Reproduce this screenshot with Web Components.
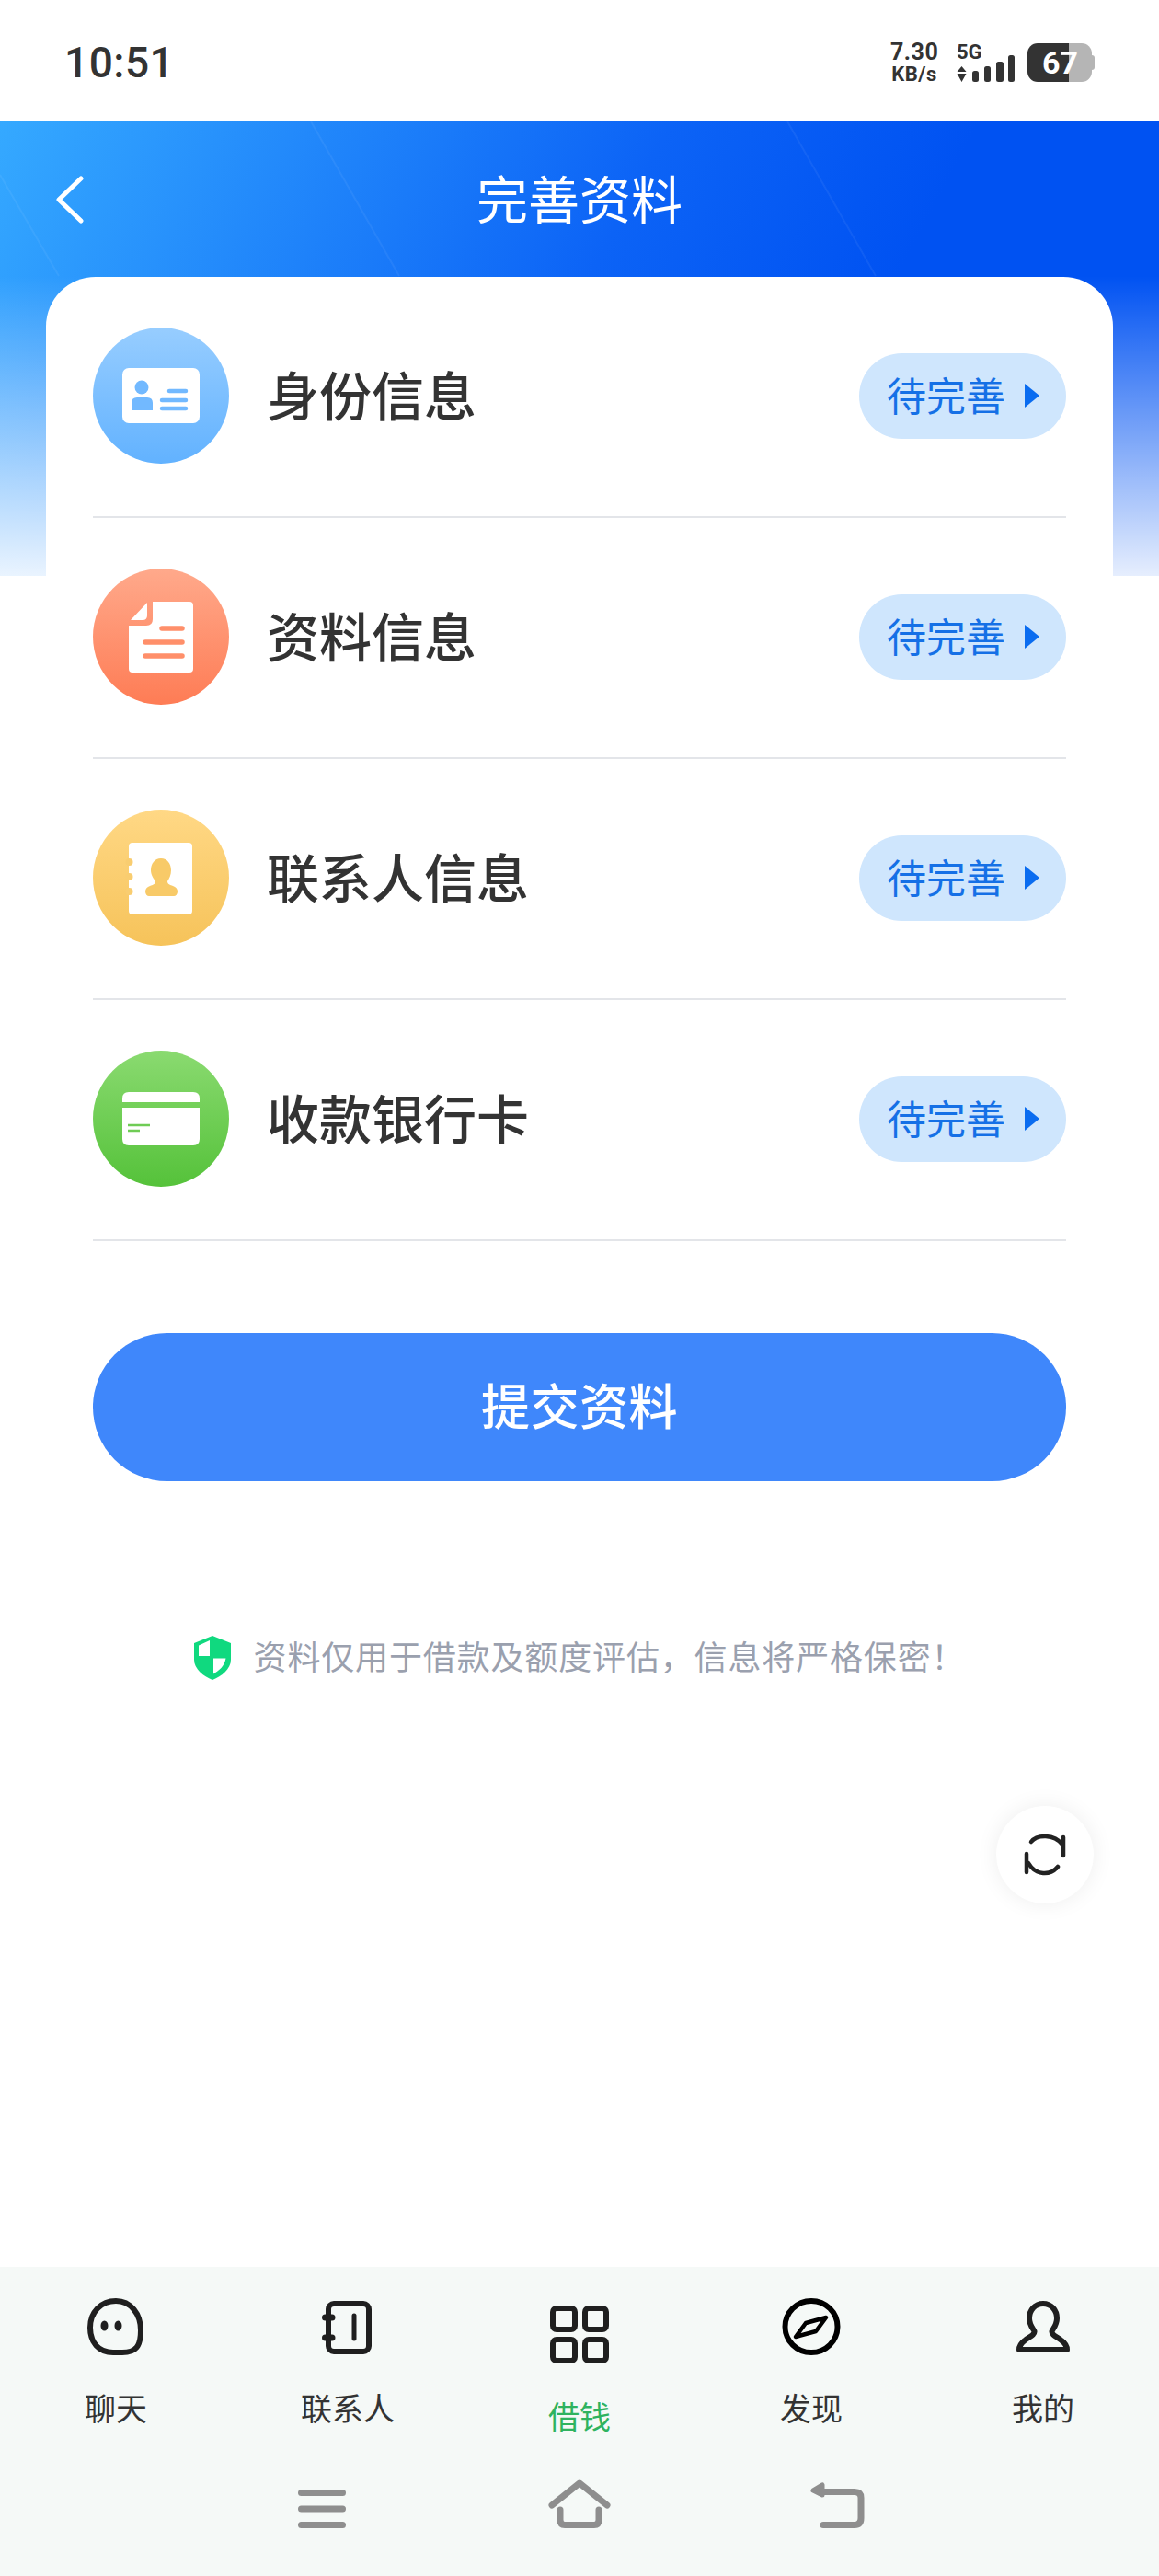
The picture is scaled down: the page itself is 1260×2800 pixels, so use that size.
<!DOCTYPE html>
<html lang="zh-CN">
<head>
<meta charset="utf-8">
<title>完善资料</title>
<style>
  html, body { margin: 0; background: #fff; }
  body { font-family: "Noto Sans CJK SC", "Noto Sans", sans-serif; }
</style>
</head>
<body>
<app-screen>
  <status-bar></status-bar>
  <page-header title="完善资料"></page-header>
  <info-card>
    <info-row label="身份信息" from="#97cdff" to="#62b2ff">
      <svg slot="icon" viewBox="0 0 148 148" width="148" height="148">
        <rect x="32" y="44" width="84" height="60" rx="7" fill="#fff"/>
        <circle cx="53" cy="65" r="7.5" fill="#72b9ff"/>
        <path d="M42 90V82q0-6 6-6h11q6 0 6 6v8z" fill="#72b9ff"/>
        <path d="M83 69H101M75 79H101M75 88H101" stroke="#72b9ff" stroke-width="4.5" stroke-linecap="round"/>
      </svg>
    </info-row>
    <info-row label="资料信息" from="#ffa98b" to="#fe7c55">
      <svg slot="icon" viewBox="0 0 148 148" width="148" height="148">
        <path d="M65 36H105q4 0 4 4V109q0 4-4 4H43q-4 0-4-4V62H58q7 0 7-7z" fill="#fff"/>
        <path d="M41 56L59 37V51q0 5-5 5z" fill="#fff"/>
        <path d="M75 65H97M57 80H97M57 95H97" stroke="#ff8f6a" stroke-width="5.5" stroke-linecap="round"/>
      </svg>
    </info-row>
    <info-row label="联系人信息" from="#ffd885" to="#f6c35a">
      <svg slot="icon" viewBox="0 0 148 148" width="148" height="148">
        <rect x="39" y="36" width="69" height="78" rx="4" fill="#fff"/>
        <circle cx="39.500" cy="57" r="4" fill="#f9cd70"/>
        <circle cx="39.500" cy="73" r="4" fill="#f9cd70"/>
        <circle cx="39.500" cy="89" r="4" fill="#f9cd70"/>
        <path d="M74 53c7 0 11 6 11 13 0 5-2 9-4 12 0 3 3 4 6 5 3 1 5 3 5 6 0 3-2 5-4 5H61c-2 0-4-2-4-5 0-3 2-5 5-6 3-1 6-2 6-5-2-3-5-7-5-12 0-7 4-13 11-13z" fill="#f8ca68"/>
      </svg>
    </info-row>
    <info-row label="收款银行卡" from="#8ada70" to="#55c23a">
      <svg slot="icon" viewBox="0 0 148 148" width="148" height="148">
        <path d="M32 56V52q0-7 7-7h70q7 0 7 7v4z" fill="#fff"/>
        <path d="M32 62H116v34q0 7-7 7H39q-7 0-7-7z" fill="#fff"/>
        <path d="M38 81H62M38 87H51" stroke="#6fcc55" stroke-width="2.500"/>
      </svg>
    </info-row>
  </info-card>
  <submit-button>提交资料</submit-button>
  <privacy-note>资料仅用于借款及额度评估，信息将严格保密！</privacy-note>
  <float-refresh></float-refresh>
  <tab-bar>
    <tab-item label="聊天">
      <svg slot="icon" viewBox="0 0 62 62" width="62" height="62" fill="none" stroke="#1f1f1f" stroke-width="6">
        <path d="M31 3C47 3 58 17 58 35C58 52 53 59 38 59H28C12 59 3 48 3 32C3 15 15 3 31 3Z"/>
        <ellipse cx="18.500" cy="30" rx="4" ry="5.500" fill="#1f1f1f" stroke="none"/>
        <ellipse cx="33.500" cy="30" rx="4" ry="5.500" fill="#1f1f1f" stroke="none"/>
      </svg>
    </tab-item>
    <tab-item label="联系人">
      <svg slot="icon" viewBox="0 0 54 62" width="54" height="62" fill="none" stroke="#1f1f1f" stroke-width="6" stroke-linecap="round" style="margin-left:-2px">
        <rect x="7" y="6" width="44" height="52" rx="6"/>
        <path d="M3.500 21H11M3.500 43H11" stroke-width="7"/>
        <path d="M35 19V44" stroke-width="5"/>
      </svg>
    </tab-item>
    <tab-item label="借钱" active>
      <svg slot="icon" viewBox="0 0 64 63" width="64" height="63" fill="none" stroke="#1f1f1f" stroke-width="6">
        <rect x="3" y="3" width="24" height="23" rx="4"/>
        <rect x="38" y="3" width="23" height="23" rx="4"/>
        <rect x="3" y="37" width="24" height="23" rx="4"/>
        <rect x="38" y="37" width="23" height="23" rx="4"/>
      </svg>
    </tab-item>
    <tab-item label="发现">
      <svg slot="icon" viewBox="0 0 64 62" width="64" height="62" fill="none" stroke="#000" stroke-width="6">
        <ellipse cx="32" cy="31" rx="28.500" ry="28"/>
        <path d="M15 42L26 27L48 21L37 36Z" stroke-width="4.500" stroke-linejoin="round"/>
      </svg>
    </tab-item>
    <tab-item label="我的">
      <svg slot="icon" viewBox="0 0 58 62" width="58" height="62" fill="none" stroke="#1f1f1f" stroke-width="6" stroke-linejoin="round">
        <path d="M29 6C38 6 44 13 44 22C44 29 40 33 38.500 36C38 40 44 42 49 46C53 49 55 52 55 56H3C3 52 5 49 9 46C14 42 20 40 19.500 36C18 33 14 29 14 22C14 13 20 6 29 6Z"/>
      </svg>
    </tab-item>
  </tab-bar>
</app-screen>

<script>
class AppScreen extends HTMLElement {
  connectedCallback() {
    this.attachShadow({ mode: "open" });
    this.shadowRoot.innerHTML = `
      <style>
        :host {
          display: flex;
          flex-direction: column;
          position: relative;
          width: 1260px;
          height: 2800px;
          overflow: hidden;
          background: #fff;
        }
      </style>
      <slot></slot>
    `;
  }
}

class StatusBar extends HTMLElement {
  connectedCallback() {
    this.attachShadow({ mode: "open" });
    this.shadowRoot.innerHTML = `
      <style>
        :host {
          display: flex;
          justify-content: space-between;
          align-items: center;
          height: 132px;
          padding: 0 73px 0 70px;
          box-sizing: border-box;
          background: #fff;
          color: #333;
          font-family: Roboto, sans-serif;
        }
        .time { font-size: 46px; font-weight: 500; letter-spacing: 0.5px; margin-top: 4px; }
        .right { display: flex; align-items: flex-end; height: 42px; margin-top: 4px; }
        .speed { width: 52px; margin: 0 20px -2px 0; font-weight: 700; letter-spacing: 0.5px; text-align: center; }
        .speed div:first-child { font-size: 25px; line-height: 24px; margin-bottom: 2px; }
        .speed div:last-child { font-size: 22px; line-height: 20px; }
        .net { width: 64px; margin-right: 13px; }
        .net b { display: block; font-size: 22px; line-height: 20px; }
        .net svg { display: block; margin-top: 2px; overflow: visible; }
        .battery {
          position: relative;
          width: 70px;
          height: 42px;
          border-radius: 11px;
          background: linear-gradient(90deg, #333 64%, #b5b5b5 64%);
          color: #fff;
          font-size: 34px;
          font-weight: 700;
          line-height: 42px;
          padding-left: 16px;
          box-sizing: border-box;
        }
        .battery::after {
          content: "";
          position: absolute;
          right: -3px;
          top: 13px;
          width: 3px;
          height: 16px;
          border-radius: 0 3px 3px 0;
          background: #b5b5b5;
        }
      </style>
      <div class="time">10:51</div>
      <div class="right">
        <div class="speed"><div>7.30</div><div>KB/s</div></div>
        <div class="net">
          <b>5G</b>
          <svg width="64" height="20" viewBox="0 0 64 20" fill="#333">
            <path d="M5.500 3L10.500 9H.5zM5.500 20L.5 11H10.500z"/>
            <rect x="17" y="8" width="7" height="12" rx="2.500"/>
            <rect x="30" y="3" width="7" height="17" rx="2.500"/>
            <rect x="43" y="-2" width="8" height="22" rx="2.500"/>
            <rect x="56" y="-9" width="7" height="29" rx="2.500"/>
          </svg>
        </div>
        <div class="battery">67</div>
      </div>
    `;
  }
}

class PageHeader extends HTMLElement {
  connectedCallback() {
    this.attachShadow({ mode: "open" });
    this.shadowRoot.innerHTML = `
      <style>
        :host {
          display: block;
          position: relative;
          height: 494px;
          background:
            linear-gradient(180deg, rgba(255,255,255,0) 34%, rgba(255,255,255,0.9) 100%),
            linear-gradient(118deg, #35a9ff 0%, #0c63f6 48%, #0052f2 70%);
        }
        .streaks { position: absolute; left: 0; top: 0; }
        .bar {
          position: relative;
          display: flex;
          align-items: center;
          justify-content: center;
          height: 168px;
        }
        .back { position: absolute; left: 59px; top: 59px; }
        h1 {
          margin: 0 0 4px;
          color: #fff;
          font-size: 56px;
          font-weight: 400;
          line-height: 1;
        }
      </style>
      <svg class="streaks" width="1260" height="494" viewBox="0 0 1260 494" fill="none" stroke="#fff" stroke-opacity="0.06" stroke-width="2">
        <path d="M338 0L434 168"/>
        <path d="M856 0L952 168"/>
        <path d="M0 58L64 168"/>
      </svg>
      <div class="bar">
        <svg class="back" width="34" height="52" viewBox="0 0 34 52" fill="none" stroke="#fff" stroke-width="5" stroke-linecap="round" stroke-linejoin="round">
          <path d="M29 3L5 26L29 49"/>
        </svg>
        <h1>${this.getAttribute("title")}</h1>
      </div>
    `;
  }
}

class InfoCard extends HTMLElement {
  connectedCallback() {
    this.attachShadow({ mode: "open" });
    this.shadowRoot.innerHTML = `
      <style>
        :host {
          display: block;
          position: relative;
          margin: -325px 50px 0;
          padding: 0 51px;
          background: #fff;
          border-radius: 54px 54px 0 0;
        }
      </style>
      <slot></slot>
    `;
  }
}

class InfoRow extends HTMLElement {
  connectedCallback() {
    const from = this.getAttribute("from");
    const to = this.getAttribute("to");
    this.attachShadow({ mode: "open" });
    this.shadowRoot.innerHTML = `
      <style>
        :host {
          display: flex;
          align-items: center;
          height: 262px;
          box-sizing: border-box;
          padding-bottom: 2px;
          border-bottom: 2px solid #e3e5e9;
        }
        .icon {
          width: 148px;
          height: 148px;
          border-radius: 50%;
          background: linear-gradient(180deg, ${from}, ${to});
          flex: none;
        }
        ::slotted(svg) { display: block; }
        .label {
          margin: 0 0 5px 41px;
          flex: 1;
          color: #333;
          font-size: 57px;
          font-weight: 500;
          line-height: 1;
        }
        .pill {
          display: flex;
          align-items: center;
          width: 225px;
          height: 93px;
          box-sizing: border-box;
          padding-left: 30px;
          border-radius: 47px;
          background: #cfe6fd;
          color: #1570e6;
          font-size: 43px;
          line-height: 1;
        }
        .pill span { margin-bottom: 4px; }
        .pill svg { margin-left: 21px; }
      </style>
      <div class="icon"><slot name="icon"></slot></div>
      <div class="label">${this.getAttribute("label")}</div>
      <div class="pill"><span>待完善</span>
        <svg width="16" height="26" viewBox="0 0 16 26"><path d="M0 0L16 13L0 26Z" fill="#0a6cf0"/></svg>
      </div>
    `;
  }
}

class SubmitButton extends HTMLElement {
  connectedCallback() {
    this.attachShadow({ mode: "open" });
    this.shadowRoot.innerHTML = `
      <style>
        :host {
          display: flex;
          align-items: center;
          justify-content: center;
          height: 161px;
          box-sizing: border-box;
          padding-bottom: 7px;
          margin: 100px 101px 0;
          border-radius: 81px;
          background: #3f87fb;
          color: #fff;
          font-size: 53px;
          font-weight: 500;
          letter-spacing: 0.5px;
        }
      </style>
      <slot></slot>
    `;
  }
}

class PrivacyNote extends HTMLElement {
  connectedCallback() {
    this.attachShadow({ mode: "open" });
    this.shadowRoot.innerHTML = `
      <style>
        :host {
          display: flex;
          align-items: center;
          justify-content: center;
          gap: 25px;
          height: 49px;
          margin-top: 167px;
          color: #9aa0ae;
          font-size: 36px;
          letter-spacing: 0.85px;
        }
        svg { flex: none; }
        span { margin-bottom: 6px; }
      </style>
      <svg width="40" height="48" viewBox="0 0 40 48">
        <path d="M20 0L40 8V26C40 36 30 44 20 48C10 44 0 36 0 26V8Z" fill="#10d97f"/>
        <path d="M17 5V22H5V10.500ZM21 24.500H34.500C33 33 27 38 21 41.500Z" fill="#fff"/>
      </svg>
      <span><slot></slot></span>
    `;
  }
}

class FloatRefresh extends HTMLElement {
  connectedCallback() {
    this.attachShadow({ mode: "open" });
    this.shadowRoot.innerHTML = `
      <style>
        :host {
          position: absolute;
          left: 1083px;
          top: 1963px;
          display: flex;
          align-items: center;
          justify-content: center;
          width: 106px;
          height: 106px;
          border-radius: 50%;
          background: #fff;
          box-shadow: 0 0 24px rgba(0, 0, 0, 0.07);
        }
      </style>
      <svg width="52" height="52" viewBox="0 0 52 52" fill="none" stroke="#222" stroke-width="4.500" stroke-linecap="round">
        <path d="M11 12C17 4 36 3 45 15"/>
        <path d="M46 7V27"/>
        <path d="M40 39C32 49 16 49 8 35"/>
        <path d="M6 25V45"/>
      </svg>
    `;
  }
}

class TabBar extends HTMLElement {
  connectedCallback() {
    this.attachShadow({ mode: "open" });
    this.shadowRoot.innerHTML = `
      <style>
        :host {
          display: block;
          margin-top: auto;
          height: 336px;
          background: #f5f9f7;
        }
        .tabs {
          display: grid;
          grid-template-columns: repeat(5, 252px);
          height: 212px;
        }
        .nav {
          display: flex;
          align-items: flex-end;
          height: 72px;
          padding-left: 324px;
        }
        .nav svg:nth-child(2) { margin-left: 220px; }
        .nav svg:nth-child(3) { margin-left: 216px; }
        svg { display: block; flex: none; }
      </style>
      <div class="tabs"><slot></slot></div>
      <div class="nav">
        <svg width="52" height="42" viewBox="0 0 52 42" fill="#8e8e8e">
          <rect width="52" height="7" rx="3.500"/>
          <rect y="17.500" width="52" height="7" rx="3.500"/>
          <rect y="35" width="52" height="7" rx="3.500"/>
        </svg>
        <svg width="68" height="53" viewBox="0 0 68 53" fill="none" stroke="#8e8e8e" stroke-width="7" stroke-linecap="round" stroke-linejoin="round">
          <path d="M4 28L34 4L64 28"/>
          <path d="M13 33V44Q13 49.500 18 49.500H50Q55 49.500 55 44V33"/>
        </svg>
        <svg width="60" height="51" viewBox="0 0 60 51" fill="none" stroke="#8e8e8e" stroke-width="7" stroke-linecap="round" stroke-linejoin="round">
          <path d="M12 11.500H49Q56 11.500 56 18V40Q56 47.500 49 47.500H15"/>
          <path d="M4 10L14 4V15Z" fill="#8e8e8e" stroke-width="5"/>
        </svg>
      </div>
    `;
  }
}

class TabItem extends HTMLElement {
  connectedCallback() {
    this.attachShadow({ mode: "open" });
    this.shadowRoot.innerHTML = `
      <style>
        :host {
          display: flex;
          flex-direction: column;
          align-items: center;
          padding-top: 34px;
          color: #333;
        }
        :host([active]) {
          padding-top: 42px;
          color: #2fb35f;
        }
        :host([active]) .label { margin-top: 38px; }
        .icon { height: 62px; }
        ::slotted(svg) { display: block; }
        .label {
          margin-top: 37px;
          font-size: 34px;
          line-height: 40px;
        }
      </style>
      <div class="icon"><slot name="icon"></slot></div>
      <div class="label">${this.getAttribute("label")}</div>
    `;
  }
}

customElements.define("app-screen", AppScreen);
customElements.define("status-bar", StatusBar);
customElements.define("page-header", PageHeader);
customElements.define("info-card", InfoCard);
customElements.define("info-row", InfoRow);
customElements.define("submit-button", SubmitButton);
customElements.define("privacy-note", PrivacyNote);
customElements.define("float-refresh", FloatRefresh);
customElements.define("tab-bar", TabBar);
customElements.define("tab-item", TabItem);
</script>
</body>
</html>
